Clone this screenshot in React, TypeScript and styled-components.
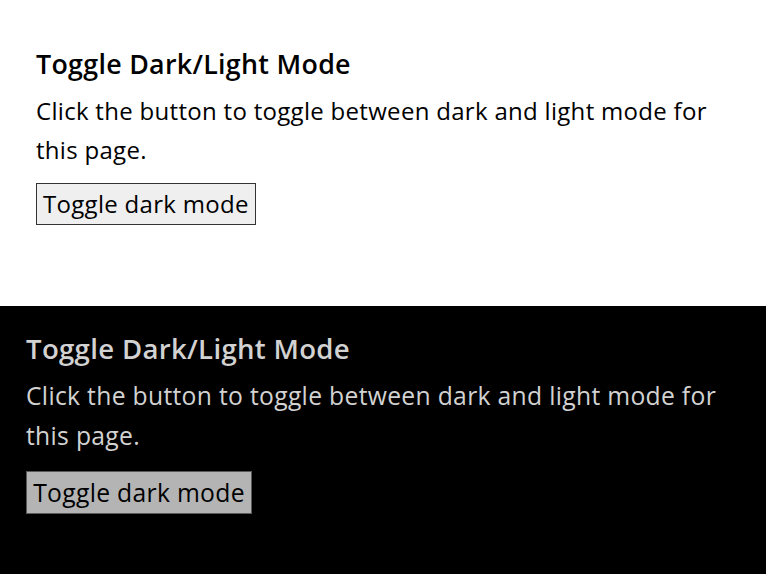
import React from 'react'
import styled, { createGlobalStyle } from 'styled-components'

const GlobalStyle = createGlobalStyle`
    html, body {
        margin: 0;
        padding: 0;
        background: #000;
    }

    body {
        font-family: "Open Sans", "Noto Sans", "Liberation Sans", sans-serif;
    }
`

const Page = styled.div`
    width: 766px;
    height: 574px;
    display: flex;
    flex-direction: column;
    overflow: hidden;
`

const Section = styled.section<{ $dark?: boolean }>`
    background: ${p => (p.$dark ? '#000' : '#fff')};
    color: ${p => (p.$dark ? '#d2d2d2' : '#000')};
    padding: ${p => (p.$dark ? '26px 0 0 26px' : '48px 0 0 36px')};
    height: ${p => (p.$dark ? '268px' : '306px')};
    box-sizing: border-box;
    font-size: ${p => (p.$dark ? '24.7px' : '24px')};
    letter-spacing: 0.0125em;
`

const Title = styled.h3`
    margin: 0 0 0.4em;
    font-size: 1.117em;
    font-weight: 600;
    line-height: 1.2;
`

const Text = styled.p`
    margin: 0 0 0.6em;
    line-height: 1.625em;
    max-width: 700px;
`

const ToggleButton = styled.button<{ $dark?: boolean }>`
    font: inherit;
    letter-spacing: inherit;
    line-height: 1.667em;
    padding: 0 0.25em;
    color: #000;
    background: ${p => (p.$dark ? '#b4b4b4' : '#efefef')};
    border: 1px solid ${p => (p.$dark ? '#5a5a5a' : '#333')};
    border-radius: 0;
    cursor: pointer;
`

function Panel({ dark }: { dark?: boolean }) {
    return (
        <Section $dark={dark}>
            <Title>Toggle Dark/Light Mode</Title>
            <Text>Click the button to toggle between dark and light mode for this page.</Text>
            <ToggleButton $dark={dark}>Toggle dark mode</ToggleButton>
        </Section>
    )
}

export default function App() {
    return (
        <Page>
            <GlobalStyle />
            <Panel />
            <Panel dark />
        </Page>
    )
}
